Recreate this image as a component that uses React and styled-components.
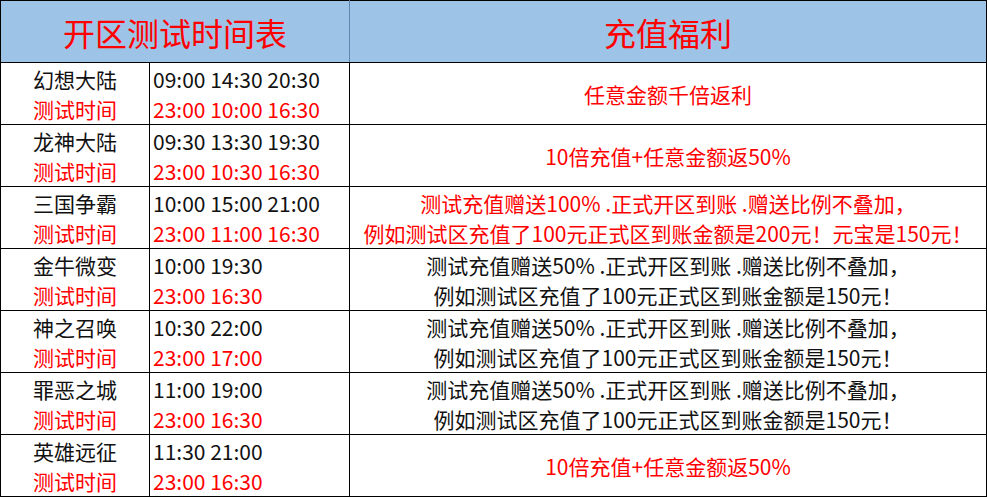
import React from "react";
import styled, { createGlobalStyle } from "styled-components";

const GlobalStyle = createGlobalStyle`
  body {
    margin: 0;
    background: #ffffff;
    font-family: "Noto Sans CJK SC", "Noto Sans", sans-serif;
  }
`;

const Table = styled.table`
  width: 986px;
  table-layout: fixed;
  border-collapse: collapse;
  border: 1px solid #000;
`;

const HeadCell = styled.th`
  height: 61px;
  padding: 0;
  background: #9dc3e6;
  color: #ff0000;
  font-size: 32px;
  font-weight: 400;
  line-height: 40px;
  text-align: center;
  border-bottom: 1px solid #000;
  border-right: 1px solid ${(p) => (p.$last ? "#000" : "#5f84ad")};
`;

const Cell = styled.td`
  height: 61px;
  padding: ${(p) => (p.$align === "left" ? "0 0 0 3px" : "0")};
  border: 1px solid #000;
  text-align: ${(p) => p.$align || "center"};
  vertical-align: middle;
  font-size: 21px;
  line-height: 30px;
  color: #111;
  white-space: nowrap;
  overflow: hidden;
`;

const Line = styled.div`
  height: 30px;
  color: ${(p) => (p.$red ? "#ff0000" : "#111")};
  font-size: 21px;
`;

const rows = [
  {
    name: "幻想大陆",
    open: "09:00 14:30 20:30",
    test: "23:00 10:00 16:30",
    perk: ["任意金额千倍返利"],
    red: true,
  },
  {
    name: "龙神大陆",
    open: "09:30 13:30 19:30",
    test: "23:00 10:30 16:30",
    perk: ["10倍充值+任意金额返50%"],
    red: true,
  },
  {
    name: "三国争霸",
    open: "10:00 15:00 21:00",
    test: "23:00 11:00 16:30",
    perk: [
      "测试充值赠送100% .正式开区到账 .赠送比例不叠加，",
      "例如测试区充值了100元正式区到账金额是200元！元宝是150元！",
    ],
    red: true,
  },
  {
    name: "金牛微变",
    open: "10:00 19:30",
    test: "23:00 16:30",
    perk: [
      "测试充值赠送50% .正式开区到账 .赠送比例不叠加，",
      "例如测试区充值了100元正式区到账金额是150元！",
    ],
  },
  {
    name: "神之召唤",
    open: "10:30 22:00",
    test: "23:00 17:00",
    perk: [
      "测试充值赠送50% .正式开区到账 .赠送比例不叠加，",
      "例如测试区充值了100元正式区到账金额是150元！",
    ],
  },
  {
    name: "罪恶之城",
    open: "11:00 19:00",
    test: "23:00 16:30",
    perk: [
      "测试充值赠送50% .正式开区到账 .赠送比例不叠加，",
      "例如测试区充值了100元正式区到账金额是150元！",
    ],
  },
  {
    name: "英雄远征",
    open: "11:30 21:00",
    test: "23:00 16:30",
    perk: ["10倍充值+任意金额返50%"],
    red: true,
  },
];

const App = () => {
  return (
    <>
      <GlobalStyle />
      <Table>
        <colgroup>
          <col style={{ width: 149 }} />
          <col style={{ width: 200 }} />
          <col style={{ width: 637 }} />
        </colgroup>
        <thead>
          <tr>
            <HeadCell colSpan={2}>开区测试时间表</HeadCell>
            <HeadCell $last>充值福利</HeadCell>
          </tr>
        </thead>
        <tbody>
          {rows.map((r) => (
            <tr key={r.name}>
              <Cell>
                <Line>{r.name}</Line>
                <Line $red>测试时间</Line>
              </Cell>
              <Cell $align="left">
                <Line>{r.open}</Line>
                <Line $red>{r.test}</Line>
              </Cell>
              <Cell>
                {r.perk.map((t) => (
                  <Line key={t} $red={r.red}>
                    {t}
                  </Line>
                ))}
              </Cell>
            </tr>
          ))}
        </tbody>
      </Table>
    </>
  );
};

export default App;
